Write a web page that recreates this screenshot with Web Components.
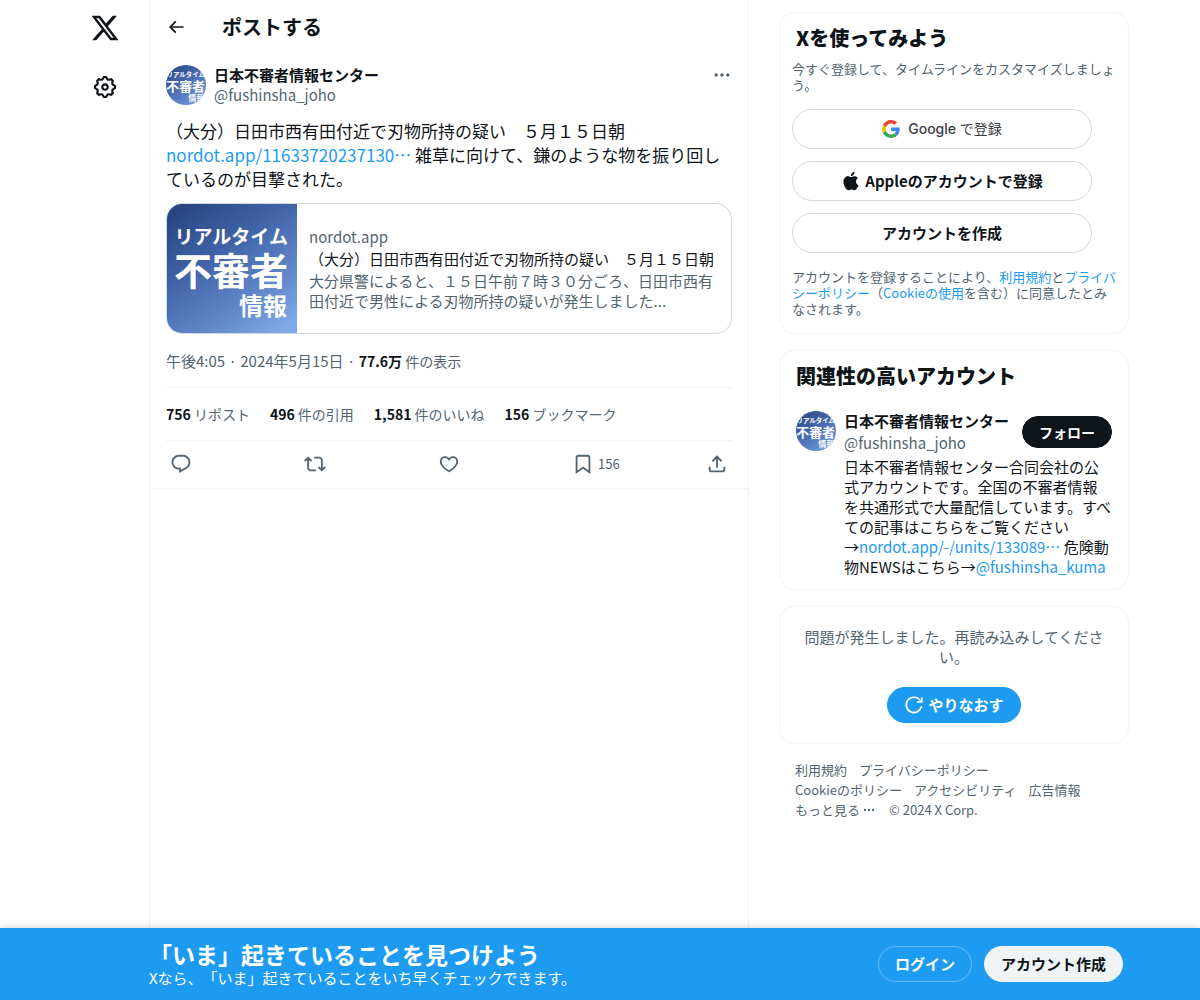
<!DOCTYPE html>
<html lang="ja">
<head>
<meta charset="utf-8">
<meta name="viewport" content="width=device-width, initial-scale=1">
<title>ポストする / X</title>
<style>
  body {
    margin: 0;
    background: #fff;
    color: #0f1419;
    font-family: "Noto Sans CJK JP", "Noto Sans", sans-serif;
    font-size: 15px;
    line-height: 20px;
    text-spacing-trim: space-all;
    --muted: #536471;
    --link: #1d9bf0;
    --line: #eff3f4;
    --edge: #cfd9de;
  }
</style>
</head>
<body>
<x-app></x-app>

<script>
const ICONS = {
  logo: '<path d="M18.244 2.25h3.308l-7.227 8.26 8.502 11.24H16.17l-5.214-6.817L4.99 21.75H1.68l7.73-8.835L1.254 2.25H8.08l4.713 6.231zm-1.161 17.52h1.833L7.084 4.126H5.117z"/>',
  gear: '<path d="M10.54 1.75h2.92l1.57 2.36c.11.17.32.25.53.21l2.53-.59 2.17 2.17-.58 2.54c-.05.2.04.41.21.53l2.36 1.57v2.92l-2.36 1.57c-.17.12-.26.33-.21.53l.58 2.54-2.17 2.17-2.53-.59c-.21-.04-.42.04-.53.21l-1.57 2.36h-2.92l-1.58-2.36c-.11-.17-.32-.25-.52-.21l-2.54.59-2.17-2.17.58-2.54c.05-.2-.03-.41-.21-.53l-2.35-1.57v-2.92L4.1 8.97c.18-.12.26-.33.21-.53L3.73 5.9 5.9 3.73l2.54.59c.2.04.41-.04.52-.21l1.58-2.36zm1.07 2l-.98 1.47C10.05 6.08 9 6.5 7.99 6.27l-1.46-.34-.6.6.33 1.46c.24 1.01-.18 2.07-1.05 2.64l-1.46.98v.78l1.46.98c.87.57 1.29 1.63 1.05 2.64l-.33 1.46.6.6 1.46-.34c1.01-.23 2.06.19 2.64 1.05l.98 1.47h.78l.97-1.47c.58-.86 1.63-1.28 2.65-1.05l1.45.34.61-.6-.34-1.46c-.23-1.01.18-2.07 1.05-2.64l1.47-.98v-.78l-1.47-.98c-.87-.57-1.28-1.63-1.05-2.64l.34-1.46-.61-.6-1.45.34c-1.02.23-2.07-.19-2.65-1.05l-.97-1.47h-.78zM12 10.5c-.83 0-1.5.67-1.5 1.5s.67 1.5 1.5 1.5c.82 0 1.5-.67 1.5-1.5s-.68-1.5-1.5-1.5zM8.5 12c0-1.93 1.56-3.5 3.5-3.5 1.93 0 3.5 1.57 3.5 3.5s-1.57 3.5-3.5 3.5c-1.94 0-3.5-1.57-3.5-3.5z"/>',
  back: '<path d="M7.414 13l5.043 5.04-1.414 1.42L3.586 12l7.457-7.46 1.414 1.42L7.414 11H21v2H7.414z"/>',
  more: '<path d="M3 12c0-1.1.9-2 2-2s2 .9 2 2-.9 2-2 2-2-.9-2-2zm9 2c1.1 0 2-.9 2-2s-.9-2-2-2-2 .9-2 2 .9 2 2 2zm7 0c1.1 0 2-.9 2-2s-.9-2-2-2-2 .9-2 2 .9 2 2 2z"/>',
  reply: '<path d="M1.751 10c0-4.42 3.584-8 8.005-8h4.366c4.49 0 8.129 3.64 8.129 8.13 0 2.96-1.607 5.68-4.196 7.11l-8.054 4.46v-3.69h-.067c-4.49.1-8.183-3.51-8.183-8.01zm8.005-6c-3.317 0-6.005 2.69-6.005 6 0 3.37 2.77 6.08 6.138 6.01l.351-.01h1.761v2.3l5.087-2.81c1.951-1.08 3.163-3.13 3.163-5.36 0-3.39-2.744-6.13-6.129-6.13H9.756z"/>',
  repost: '<path d="M4.5 3.88l4.432 4.14-1.364 1.46L5.5 7.55V16c0 1.1.896 2 2 2H13v2H7.5c-2.209 0-4-1.79-4-4V7.55L1.432 9.48.068 8.02 4.5 3.88zM16.5 6H11V4h5.5c2.209 0 4 1.79 4 4v8.45l2.068-1.93 1.364 1.46-4.432 4.14-4.432-4.14 1.364-1.46 2.068 1.93V8c0-1.1-.896-2-2-2z"/>',
  like: '<path d="M16.697 5.5c-1.222-.06-2.679.51-3.89 2.16l-.805 1.09-.806-1.09C9.984 6.01 8.526 5.44 7.304 5.5c-1.243.07-2.349.78-2.91 1.91-.552 1.12-.633 2.78.479 4.82 1.074 1.97 3.257 4.27 7.129 6.61 3.87-2.34 6.052-4.64 7.126-6.61 1.111-2.04 1.03-3.7.477-4.82-.561-1.13-1.666-1.84-2.908-1.91zm4.187 7.69c-1.351 2.48-4.001 5.12-8.379 7.67l-.503.3-.504-.3c-4.379-2.55-7.029-5.19-8.382-7.67-1.36-2.5-1.41-4.86-.514-6.67.887-1.79 2.647-2.91 4.601-3.01 1.651-.09 3.368.56 4.798 2.01 1.429-1.45 3.146-2.1 4.796-2.01 1.954.1 3.714 1.22 4.601 3.01.896 1.81.846 4.17-.514 6.67z"/>',
  bookmark: '<path d="M4 4.5C4 3.12 5.119 2 6.5 2h11C18.881 2 20 3.12 20 4.5v18.44l-8-5.71-8 5.71V4.5zM6.5 4c-.276 0-.5.22-.5.5v14.56l6-4.29 6 4.29V4.5c0-.28-.224-.5-.5-.5h-11z"/>',
  share: '<path d="M12 2.59l5.7 5.7-1.41 1.42L13 6.41V16h-2V6.41l-3.3 3.3-1.41-1.42L12 2.59zM21 15l-.02 3.51c0 1.38-1.12 2.49-2.5 2.49H5.5C4.11 21 3 19.88 3 18.5V15h2v3.5c0 .28.22.5.5.5h12.98c.28 0 .5-.22.5-.5L19 15h2z"/>',
  retry: '<path d="M20.8 14.2A9.2 9.2 0 1 1 19 6" fill="none" stroke="currentColor" stroke-width="2" stroke-linecap="round"/><path d="M22.4 2.6v6.8h-6.8V7.6h3.2l1.8-1.8V2.6z"/>',
  apple: '<path d="M16.365 1.43c0 1.14-.493 2.27-1.177 3.08-.744.9-1.99 1.57-2.987 1.57-.12 0-.23-.02-.3-.03-.01-.06-.04-.22-.04-.39 0-1.15.572-2.27 1.206-2.98.804-.94 2.142-1.64 3.248-1.68.03.13.05.28.05.43zm4.565 15.71c-.03.07-.463 1.58-1.518 3.12-.945 1.34-1.94 2.71-3.43 2.71-1.517 0-1.9-.88-3.63-.88-1.698 0-2.302.91-3.67.91-1.377 0-2.332-1.26-3.428-2.8-1.287-1.82-2.323-4.63-2.323-7.28 0-4.28 2.797-6.55 5.552-6.55 1.448 0 2.675.95 3.6.95.865 0 2.222-1.01 3.902-1.01.613 0 2.886.06 4.374 2.19-.13.09-2.383 1.37-2.383 4.19 0 3.26 2.854 4.42 2.955 4.45z"/>',
  google: '<g transform="scale(.5)"><path fill="#EA4335" d="M24 9.5c3.54 0 6.71 1.22 9.21 3.6l6.85-6.85C35.9 2.38 30.47 0 24 0 14.62 0 6.51 5.38 2.56 13.22l7.98 6.19C12.43 13.72 17.74 9.5 24 9.5z"/><path fill="#4285F4" d="M46.98 24.55c0-1.57-.15-3.09-.38-4.55H24v9.02h12.94c-.58 2.96-2.26 5.48-4.78 7.18l7.73 6c4.51-4.18 7.09-10.36 7.09-17.65z"/><path fill="#FBBC05" d="M10.53 28.59c-.48-1.45-.76-2.99-.76-4.59s.27-3.14.76-4.59l-7.98-6.19C.92 16.46 0 20.12 0 24c0 3.88.92 7.54 2.56 10.78l7.97-6.19z"/><path fill="#34A853" d="M24 48c6.48 0 11.93-2.13 15.89-5.81l-7.73-6c-2.15 1.45-4.92 2.3-8.16 2.3-6.26 0-11.57-4.22-13.47-9.91l-7.98 6.19C6.51 42.62 14.62 48 24 48z"/></g>'
};

function define(name, html) {
  customElements.define(name, class extends HTMLElement {
    constructor() {
      super();
      this.attachShadow({ mode: 'open' }).innerHTML = html.trim();
    }
  });
}

customElements.define('x-icon', class extends HTMLElement {
  connectedCallback() {
    if (this.shadowRoot) return;
    const size = this.getAttribute('size') || '22';
    this.attachShadow({ mode: 'open' }).innerHTML = `
      <style>
        :host { display: block; flex: none; width: ${size}px; height: ${size}px; }
        svg { display: block; width: 100%; height: 100%; fill: currentColor; }
      </style>
      <svg viewBox="0 0 24 24" aria-hidden="true">${ICONS[this.getAttribute('name')]}</svg>`;
  }
});

/* Account artwork: full square, or cropped to a circle with the "round" attribute. */
customElements.define('x-art', class extends HTMLElement {
  connectedCallback() {
    if (this.shadowRoot) return;
    const round = this.hasAttribute('round');
    this.attachShadow({ mode: 'open' }).innerHTML = `
      <style>
        :host { display: block; flex: none; width: 130px; height: 130px; overflow: hidden; }
        :host([round]) { width: 40px; height: 40px; border-radius: 50%; }
        svg { display: block; width: 100%; height: 100%; }
        text { fill: #fff; font-family: "Noto Sans CJK JP", sans-serif; font-weight: 700; text-anchor: end; }
      </style>
      <svg viewBox="${round ? '6 4 118 118' : '0 0 130 130'}">
        <defs><linearGradient id="g" x1="0.15" y1="0" x2="0.85" y2="1">
          <stop offset="0" stop-color="#294681"/><stop offset=".35" stop-color="#3f62a6"/>
          <stop offset=".72" stop-color="#6088c9"/><stop offset="1" stop-color="#7fa9e8"/>
        </linearGradient></defs>
        <rect width="130" height="130" fill="url(#g)"/>
        <text x="121" y="40" font-size="19">リアルタイム</text>
        <text x="121" y="81" font-size="38">不審者</text>
        <text x="120" y="111" font-size="24">情報</text>
      </svg>`;
  }
});

define('x-button', `
  <style>
    :host { display: block; }
    button {
      box-sizing: border-box; width: 100%; height: 36px; margin: 0; padding: 0 16px;
      display: flex; align-items: center; justify-content: center; gap: 4px;
      border: 1px solid var(--edge); border-radius: 20px; background: #fff; color: #0f1419;
      font: 700 15px/20px "Noto Sans CJK JP", sans-serif; white-space: nowrap; cursor: pointer;
    }
    :host([tall]) button { height: 40px; }
    :host([kind=dark]) button { height: 32px; background: #0f1419; border-color: #0f1419; color: #fff; font-size: 14px; }
    :host([kind=blue]) button { background: #1d9bf0; border-color: #1d9bf0; color: #fff; }
    :host([kind=ghost]) button { background: none; border-color: #67b9f4; color: #fff; }
    :host([kind=light]) button { background: #eff3f4; border-color: #eff3f4; }
    :host([kind=google]) button { gap: 8px; color: #3c4043; font: 500 14px/20px Inter, "Noto Sans CJK JP", sans-serif; }
  </style>
  <button type="button"><slot></slot></button>`);

define('x-link', `
  <style>
    :host { display: inline; color: var(--link); }
    :host([plain]) { color: inherit; }
    a { color: inherit; text-decoration: none; }
    a:hover { text-decoration: underline; }
  </style><a href="#"><slot></slot></a>`);

define('x-card', `
  <style>
    :host { display: block; border: 1px solid var(--line); border-radius: 16px; }
  </style>
  <slot></slot>`);

define('x-rail', `
  <style>
    :host { display: flex; justify-content: flex-end; }
    nav { width: 88px; display: flex; flex-direction: column; align-items: center; gap: 29px; padding-top: 13px; }
    a { color: #0f1419; display: grid; place-items: center; height: 30px; }
  </style>
  <nav>
    <a href="#" aria-label="X"><x-icon name="logo" size="30"></x-icon></a>
    <a href="#" aria-label="設定"><x-icon name="gear" size="26"></x-icon></a>
  </nav>`);

define('x-stat', `
  <style>
    :host { display: block; color: var(--muted); white-space: nowrap; }
    a { color: inherit; text-decoration: none; }
    ::slotted(b) { color: #0f1419; }
  </style><a href="#"><slot></slot></a>`);

define('x-action', `
  <style>
    :host { display: block; flex: 1; }
    :host(:last-child) { flex: none; }
    button { display: flex; align-items: center; gap: 4px; padding: 0; border: 0; background: none;
      color: var(--muted); font: 13px/16px "Noto Sans CJK JP", sans-serif; }
  </style>
  <button type="button"><slot></slot></button>`);

define('x-preview', `
  <style>
    :host { display: block; }
    a { display: flex; overflow: hidden; border: 1px solid var(--edge); border-radius: 16px;
      color: var(--muted); text-decoration: none; }
    div { flex: 1; min-width: 0; padding: 0 12px; display: flex; flex-direction: column; justify-content: center; gap: 2px; }
    p { margin: 0; }
    .t { color: #0f1419; }
    x-art { margin-bottom: -1px; }
  </style>
  <a href="#">
    <x-art></x-art>
    <div>
      <p>nordot.app</p>
      <p class="t">（大分）日田市西有田付近で刃物所持の疑い　５月１５日朝</p>
      <p>大分県警によると、１５日午前７時３０分ごろ、日田市西有田付近で男性による刃物所持の疑いが発生しました...</p>
    </div>
  </a>`);

define('x-post', `
  <style>
    :host { display: block; padding: 12px 16px 0; border-bottom: 1px solid var(--line); }
    header { display: flex; gap: 8px; }
    .who { flex: 1; }
    .who b, .who span { display: block; }
    .who span, .meta { color: var(--muted); }
    .dots { border: 0; padding: 0; background: none; color: var(--muted); height: 20px; }
    .body { margin: 14px 0 12px; font-size: 17px; line-height: 24px; }
    .meta { margin: 17px 0 16px; }
    .views { font-size: 14px; }
    .meta b { color: #0f1419; }
    .stats { display: flex; gap: 20px; padding: 16px 0; border: solid var(--line); border-width: 1px 0; font-size: 14px; }
    .acts { display: flex; padding: 12px 4px 13px; }
  </style>
  <article>
    <header>
      <x-art round></x-art>
      <div class="who"><b>日本不審者情報センター</b><span>@fushinsha_joho</span></div>
      <button class="dots" type="button" aria-label="もっと見る"><x-icon name="more" size="20"></x-icon></button>
    </header>
    <div class="body">（大分）日田市西有田付近で刃物所持の疑い　５月１５日朝<br><x-link>nordot.app/11633720237130…</x-link> 雑草に向けて、鎌のような物を振り回しているのが目撃された。</div>
    <x-preview></x-preview>
    <div class="meta">午後4:05 · 2024年5月15日 · <span class="views"><b>77.6万</b> 件の表示</span></div>
    <div class="stats">
      <x-stat><b>756</b> リポスト</x-stat>
      <x-stat><b>496</b> 件の引用</x-stat>
      <x-stat><b>1,581</b> 件のいいね</x-stat>
      <x-stat><b>156</b> ブックマーク</x-stat>
    </div>
    <div class="acts">
      <x-action><x-icon name="reply"></x-icon></x-action>
      <x-action><x-icon name="repost"></x-icon></x-action>
      <x-action><x-icon name="like"></x-icon></x-action>
      <x-action><x-icon name="bookmark"></x-icon><span>156</span></x-action>
      <x-action><x-icon name="share"></x-icon></x-action>
    </div>
  </article>`);

define('x-timeline', `
  <style>
    :host { display: block; border: solid var(--line); border-width: 0 1px; box-sizing: border-box; }
    header { display: flex; align-items: center; gap: 36px; height: 53px; padding: 0 16px; }
    button { border: 0; padding: 0; background: none; color: #0f1419; }
    h1 { margin: 0; font-size: 20px; line-height: 24px; font-weight: 700; }
  </style>
  <header>
    <button type="button" aria-label="戻る"><x-icon name="back" size="20"></x-icon></button>
    <h1>ポストする</h1>
  </header>
  <x-post></x-post>`);

define('x-sidebar', `
  <style>
    :host { display: flex; flex-direction: column; gap: 16px; padding-top: 12px; }
    h2 { margin: 0; padding: 13px 16px 11px; font-size: 20px; line-height: 24px; font-weight: 800; }
    p { margin: 0; }
    .small { padding: 0 8px 0 12px; color: var(--muted); font-size: 13px; line-height: 16px; }
    .btns { display: flex; flex-direction: column; gap: 12px; width: 300px; padding: 16px 12px; }
    .signup { padding-bottom: 16px; }
    .person { display: flex; gap: 8px; padding: 12px 16px; }
    .info { flex: 1; }
    .top { display: flex; justify-content: space-between; align-items: center; }
    .top b, .top span { display: block; white-space: nowrap; }
    .top span { color: var(--muted); margin-top: 2px; }
    .top x-button { width: 90px; }
    .bio { margin-top: 4px; }
    .keep { white-space: nowrap; }
    .light { font-weight: 400; }
    .error { display: flex; flex-direction: column; align-items: center; gap: 20px; padding: 20px; text-align: center; color: var(--muted); }
    footer { display: flex; flex-wrap: wrap; padding: 0 16px; color: var(--muted); font-size: 13px; line-height: 20px; }
    footer > * { margin: 0 12px 0 0; }
    .more { display: flex; align-items: center; gap: 2px; border: 0; padding: 0 1px 0 0; background: none; color: inherit; font: inherit; }
  </style>
  <x-card>
    <h2>Xを使ってみよう</h2>
    <p class="small">今すぐ登録して、タイムラインをカスタマイズしましょう。</p>
    <div class="btns">
      <x-button tall kind="google"><x-icon name="google" size="18"></x-icon><span>Google <span class="light">で登録</span></span></x-button>
      <x-button tall><x-icon name="apple" size="20"></x-icon><span>Appleのアカウントで登録</span></x-button>
      <x-button tall>アカウントを作成</x-button>
    </div>
    <p class="small signup">アカウントを登録することにより、<x-link>利用規約</x-link>と<x-link>プライバシーポリシー</x-link>（<x-link>Cookieの使用</x-link>を含む）に同意したとみなされます。</p>
  </x-card>
  <x-card>
    <h2>関連性の高いアカウント</h2>
    <div class="person">
      <x-art round></x-art>
      <div class="info">
        <div class="top">
          <div><b>日本不審者情報センター</b><span>@fushinsha_joho</span></div>
          <x-button kind="dark">フォロー</x-button>
        </div>
        <p class="bio">日本不審者情報センター合同会社の公式アカウントです。全国の不審者情報を共通形式で大量配信しています。すべての記事はこちらをご覧ください<span class="keep">→<x-link>nordot.app/-/units/133089…</x-link></span> 危険動物NEWSはこちら→<x-link>@fushinsha_kuma</x-link></p>
      </div>
    </div>
  </x-card>
  <x-card>
    <div class="error">
      <p>問題が発生しました。再読み込みしてください。</p>
      <x-button kind="blue"><x-icon name="retry" size="20"></x-icon><span>やりなおす</span></x-button>
    </div>
  </x-card>
  <footer>
    <x-link plain>利用規約</x-link><x-link plain>プライバシーポリシー</x-link>
    <x-link plain>Cookieのポリシー</x-link><x-link plain>アクセシビリティ</x-link><x-link plain>広告情報</x-link>
    <button class="more" type="button">もっと見る<x-icon name="more" size="14"></x-icon></button><span>© 2024 X Corp.</span>
  </footer>`);

define('x-bar', `
  <style>
    :host { display: flex; align-items: center; box-sizing: border-box; min-height: 72px; color: #fff;
      background: #1d9bf0; box-shadow: 0 0 8px rgba(0, 0, 0, .2);
      position: sticky; bottom: 0; }
    .lead { flex: 149 1 0; }
    .tail { flex: 77 1 0; }
    .row { flex: 974 1 0; display: flex; align-items: center; gap: 12px; }
    .text { flex: 1; }
    .text b { display: block; font-size: 23px; line-height: 28px; }
  </style>
  <div class="lead"></div>
  <div class="row">
    <div class="text"><b>「いま」起きていることを見つけよう</b><span>Xなら、「いま」起きていることをいち早くチェックできます。</span></div>
    <x-button kind="ghost">ログイン</x-button>
    <x-button kind="light">アカウント作成</x-button>
  </div>
  <div class="tail"></div>`);

define('x-app', `
  <style>
    :host { display: flex; flex-direction: column; min-height: 100vh; }
    main { flex: 1; display: flex; }
    x-rail { flex: 149 1 0; }
    x-timeline { flex: 0 1 600px; }
    x-sidebar { flex: 0 0 350px; margin-left: 30px; }
    .space { flex: 71 1 0; }
  </style>
  <main>
    <x-rail></x-rail>
    <x-timeline></x-timeline>
    <x-sidebar></x-sidebar>
    <div class="space"></div>
  </main>
  <x-bar></x-bar>`);
</script>
</body>
</html>
